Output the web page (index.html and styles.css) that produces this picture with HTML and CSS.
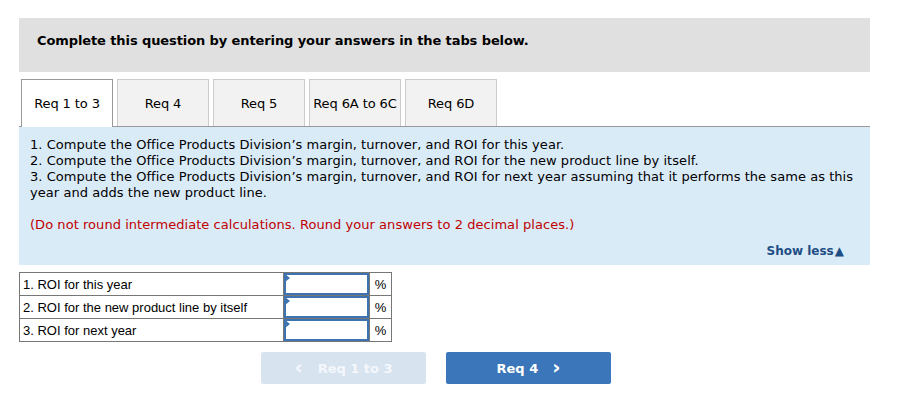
FILE: index.html
```html
<!DOCTYPE html>
<html>
<head>
<meta charset="utf-8">
<link rel="stylesheet" href="styles.css">
</head>
<body>
<div class="wrap">
  <div class="banner">Complete this question by entering your answers in the tabs below.</div>
  <div class="tabs">
    <div class="tab active">Req 1 to 3</div>
    <div class="tab">Req 4</div>
    <div class="tab">Req 5</div>
    <div class="tab">Req 6A to 6C</div>
    <div class="tab">Req 6D</div>
  </div>
  <div class="panel">
    <p class="q">1. Compute the Office Products Division’s margin, turnover, and ROI for this year.<br>2. Compute the Office Products Division’s margin, turnover, and ROI for the new product line by itself.<br>3. Compute the Office Products Division’s margin, turnover, and ROI for next year assuming that it performs the same as this year and adds the new product line.</p>
    <p class="note">(Do not round intermediate calculations. Round your answers to 2 decimal places.)</p>
    <div class="showless">Show less<span class="tri">▲</span></div>
  </div>
  <table class="ans">
    <tr><td class="lbl">1. ROI for this year</td><td class="inp"><span class="flag"></span></td><td class="pct">%</td></tr>
    <tr><td class="lbl">2. ROI for the new product line by itself</td><td class="inp"><span class="flag"></span></td><td class="pct">%</td></tr>
    <tr><td class="lbl">3. ROI for next year</td><td class="inp"><span class="flag"></span></td><td class="pct">%</td></tr>
  </table>
  <div class="nav">
    <div class="btn prev"><span class="chev">‹</span>Req 1 to 3</div>
    <div class="btn next">Req 4<span class="chev">›</span></div>
  </div>
</div>
</body>
</html>
```

FILE: styles.css
```css
html, body { margin: 0; padding: 0; background: #fff; }
body { font-family: Verdana, "DejaVu Sans", sans-serif; color: #000; }
.wrap { margin: 18px 0 0 19px; width: 851px; }
.banner {
  background: #e0e0e0;
  height: 54px;
  box-sizing: border-box;
  padding: 15px 0 0 18px;
  font-size: 13px;
  font-weight: bold;
  letter-spacing: -0.1px;
}
.tabs {
  display: flex;
  gap: 4px;
  margin-top: 7px;
  padding-left: 2px;
  border-bottom: 1px solid #999;
  height: 47px;
}
.tab {
  width: 92px;
  height: 47px;
  box-sizing: border-box;
  border: 1px solid #ccc;
  border-bottom: none;
  background: #f2f2f2;
  font-size: 13px;
  display: flex;
  align-items: center;
  justify-content: center;
  letter-spacing: -0.1px;
}
.tab.active {
  background: #fff;
  border-color: #999;
  height: 48px;
  position: relative;
}
.panel {
  background: #daebf8;
  padding: 10px 12px 6px 11px;
  font-size: 13px;
  letter-spacing: 0.05px;
}
.q { margin: 0; line-height: 16px; }
.note { margin: 16px 0 0 0; color: #c00000; line-height: 16px; }
.showless {
  text-align: right;
  font-weight: bold;
  color: #1f4e84;
  font-size: 12px;
  margin-top: 10px;
  padding-right: 14px;
  line-height: 16px;
  letter-spacing: 0;
}
.tri { font-size: 12px; margin-left: 1px; }
.ans {
  border-collapse: collapse;
  margin-top: 7px;
  font-family: Arial, "Liberation Sans", sans-serif;
  font-size: 13px;
}
.ans td { border: 1px solid #777; height: 22px; padding: 0; }
.lbl { width: 260px; padding-left: 3px !important; }
.inp { width: 85px; position: relative; }
.inp::before {
  content: "";
  position: absolute;
  left: 0; right: 0; top: 0; bottom: 0;
  border: 2px solid #3d73b0;
}
.flag {
  position: absolute;
  left: 1px; top: 1px;
  width: 0; height: 0;
  border-top: 4px solid transparent;
  border-bottom: 4px solid transparent;
  border-left: 5px solid #3d73b0;
}
.pct { width: 21px; text-align: center; font-size: 13px; }
.nav {
  display: flex;
  gap: 20px;
  margin: 10px 0 0 242px;
}
.btn {
  width: 165px;
  height: 32px;
  border-radius: 2px;
  display: flex;
  align-items: center;
  justify-content: center;
  font-size: 13px;
  font-weight: bold;
  color: #fff;
}
.prev { background: #d8e3f0; color: #f4f7fb; }
.next { background: #3a76b9; }
.chev { font-size: 20px; font-weight: bold; line-height: 1; position: relative; top: -1px; }
.prev .chev { margin-right: 15px; }
.next .chev { margin-left: 14px; }
```
